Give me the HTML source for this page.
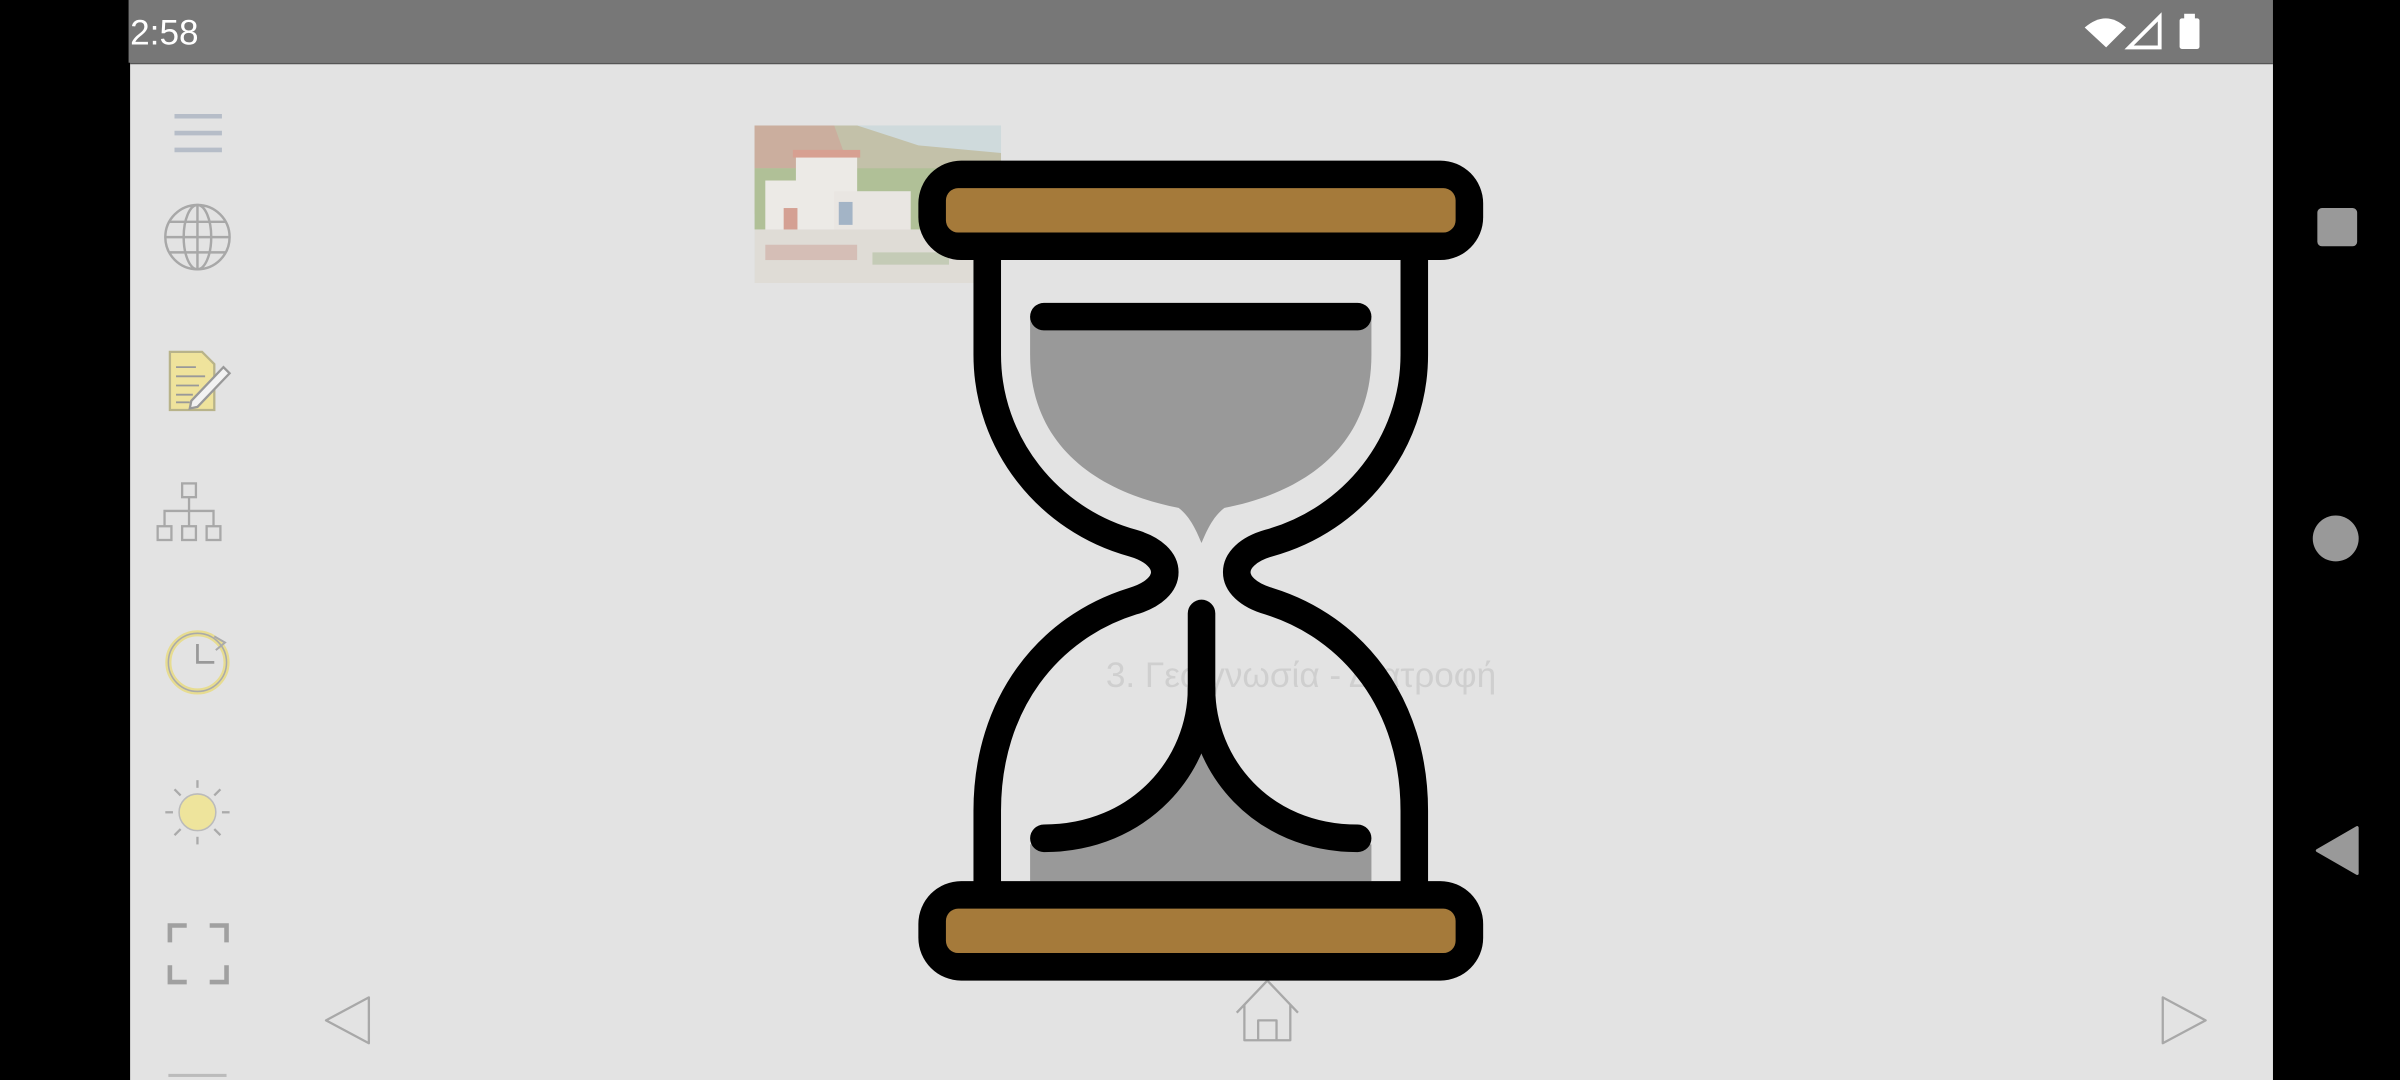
<!DOCTYPE html>
<html><head><meta charset="utf-8"><style>
html,body{margin:0;padding:0;background:#000;width:2400px;height:1080px;overflow:hidden}
svg{display:block}
</style></head><body>
<svg width="2400" height="1080" viewBox="0 0 1568 706" preserveAspectRatio="none" xmlns="http://www.w3.org/2000/svg">
<rect x="0" y="0" width="1568" height="706" fill="#000"/>
<rect x="84" y="0" width="1401" height="41" fill="#777"/>
<text x="85" y="29" font-family="Liberation Sans, sans-serif" font-size="23" fill="#fff">2:58</text>
<path d="M1362,18 L1376,31 L1389,18 Q1376,6 1362,18Z" fill="#fff"/>
<path d="M1391,31 L1411,31 L1411,11Z" fill="none" stroke="#fff" stroke-width="2.5"/>
<rect x="1424" y="12" width="13" height="20" rx="1.5" fill="#fff"/><rect x="1427" y="9" width="7" height="4" fill="#fff"/>
<rect x="85" y="41" width="1400" height="665" fill="#e3e3e3"/>
<line x1="85" y1="41.5" x2="1485" y2="41.5" stroke="#555" stroke-width="1"/>
<rect x="1514" y="136" width="26" height="25" rx="3" fill="#999"/>
<circle cx="1526" cy="352" r="15" fill="#999"/>
<path d="M1540,541 L1540,571 L1514,556Z" fill="#999" stroke="#999" stroke-width="2" stroke-linejoin="round"/>
<g stroke="#b6bdc8" stroke-width="3"><line x1="114" y1="76" x2="145" y2="76"/><line x1="114" y1="87" x2="145" y2="87"/><line x1="114" y1="98" x2="145" y2="98"/></g>
<g fill="none" stroke="#a8a8a8" stroke-width="1.6"><circle cx="129" cy="155" r="21"/><ellipse cx="129" cy="155" rx="9" ry="21"/><line x1="129" y1="134" x2="129" y2="176"/><line x1="108" y1="155" x2="150" y2="155"/><path d="M111,145 H147 M111,165 H147"/></g>
<path d="M111,230 L132,230 L140,238 L140,268 L111,268Z" fill="#efe39c" stroke="#b8b38a" stroke-width="1.5"/>
<g stroke="#999" stroke-width="1.2"><line x1="115" y1="240" x2="128" y2="240"/><line x1="115" y1="246" x2="134" y2="246"/><line x1="115" y1="252" x2="130" y2="252"/><line x1="115" y1="258" x2="126" y2="258"/><line x1="115" y1="263" x2="124" y2="263"/></g>
<path d="M125,262 L146,240 L150,244 L129,266 L124,267Z" fill="#f2f2f2" stroke="#999" stroke-width="1.5"/>
<g fill="none" stroke="#a8a8a8" stroke-width="1.5"><rect x="119" y="316" width="9" height="9"/><rect x="103" y="344" width="9" height="9"/><rect x="119" y="344" width="9" height="9"/><rect x="135" y="344" width="9" height="9"/><path d="M123.5,325 V344 M107.5,344 V334 H139.5 V344"/></g>
<circle cx="129" cy="433" r="19" fill="none" stroke="#e7dc90" stroke-width="4"/><circle cx="129" cy="433" r="19" fill="none" stroke="#aaa" stroke-width="1"/>
<path d="M129,421 V433 H140" fill="none" stroke="#999" stroke-width="1.8"/>
<path d="M140,416 L147,420 L141,425" fill="none" stroke="#aaa" stroke-width="1.3"/>
<circle cx="129" cy="531" r="12" fill="#eee49c" stroke="#bbb" stroke-width="1"/>
<g stroke="#aaa" stroke-width="1.5"><line x1="129" y1="510" x2="129" y2="515"/><line x1="129" y1="547" x2="129" y2="552"/><line x1="108" y1="531" x2="113" y2="531"/><line x1="145" y1="531" x2="150" y2="531"/><line x1="114" y1="516" x2="118" y2="520"/><line x1="140" y1="542" x2="144" y2="546"/><line x1="144" y1="516" x2="140" y2="520"/><line x1="118" y1="542" x2="114" y2="546"/></g>
<path d="M111,616 V605 H122 M137,605 H148 V616 M148,631 V642 H137 M122,642 H111 V631" fill="none" stroke="#a0a0a0" stroke-width="3"/>
<rect x="110" y="702" width="38" height="2" fill="#bbb"/>
<g fill="none" stroke="#a8a8a8" stroke-width="1.5" stroke-linejoin="round"><path d="M241,652 L241,682 L213,667Z"/><path d="M1413,652 L1413,682 L1441,667Z"/><path d="M808,662 L828,641 L848,662 M813,657 V680 H843 V657 M822,680 V667 H834 V680"/></g>
<g opacity="0.55">
<rect x="493" y="82" width="161" height="103" fill="#bfd3d8"/>
<path d="M493,82 H560 L600,95 L654,100 V140 H493Z" fill="#a9a67a"/>
<path d="M493,82 H545 L555,110 L493,110Z" fill="#b98466"/>
<rect x="493" y="110" width="161" height="40" fill="#88a55a"/>
<rect x="500" y="118" width="50" height="38" fill="#f4f0ea"/>
<rect x="520" y="100" width="40" height="26" fill="#f4f0ea"/><rect x="518" y="98" width="44" height="5" fill="#cf6a4f"/>
<rect x="545" y="125" width="50" height="28" fill="#eeeae2"/>
<rect x="512" y="136" width="9" height="17" fill="#c96a52"/><rect x="548" y="132" width="9" height="15" fill="#6f8eb0"/>
<rect x="493" y="150" width="161" height="35" fill="#dcd8cc"/>
<rect x="500" y="160" width="60" height="10" fill="#b86a5a" opacity="0.5"/><rect x="570" y="165" width="50" height="8" fill="#7a9a5a" opacity="0.5"/>
</g>
<text x="850" y="449" text-anchor="middle" font-family="Liberation Sans Narrow, Liberation Sans, sans-serif" font-size="23" textLength="255" fill="#cfcfcf">3. Γεωγνωσία - Διατροφή</text>
<path d="M673,207 H896 V232 C896,292 852,322 800,332 C792,338 788,348 785,355 C782,348 778,338 770,332 C718,322 673,292 673,232Z" fill="#999"/>
<path d="M673,576 V552 C735,546 772,505 785,468 C798,505 835,546 896,552 V576Z" fill="#999"/>
<g fill="none" stroke="#000" stroke-width="18" stroke-linecap="round">
<path d="M645,165 V232 C645,290 685,340 740,355 C768,363 768,385 740,393 C685,410 645,460 645,530 V580" stroke-linecap="butt"/>
<path d="M924,165 V232 C924,290 884,340 829,355 C801,363 801,385 829,393 C884,410 924,460 924,530 V580" stroke-linecap="butt"/>
<line x1="682" y1="207" x2="887" y2="207"/>
<path d="M682,548 C745,548 785,500 785,450 V401"/>
<path d="M887,548 C824,548 785,500 785,450"/>
</g>
<rect x="600" y="105" width="369" height="65" rx="28" fill="#000"/>
<rect x="618" y="123" width="333" height="29" rx="8" fill="#a57a3a"/>
<rect x="600" y="576" width="369" height="65" rx="28" fill="#000"/>
<rect x="618" y="594" width="333" height="29" rx="8" fill="#a57a3a"/>
</svg>
</body></html>
